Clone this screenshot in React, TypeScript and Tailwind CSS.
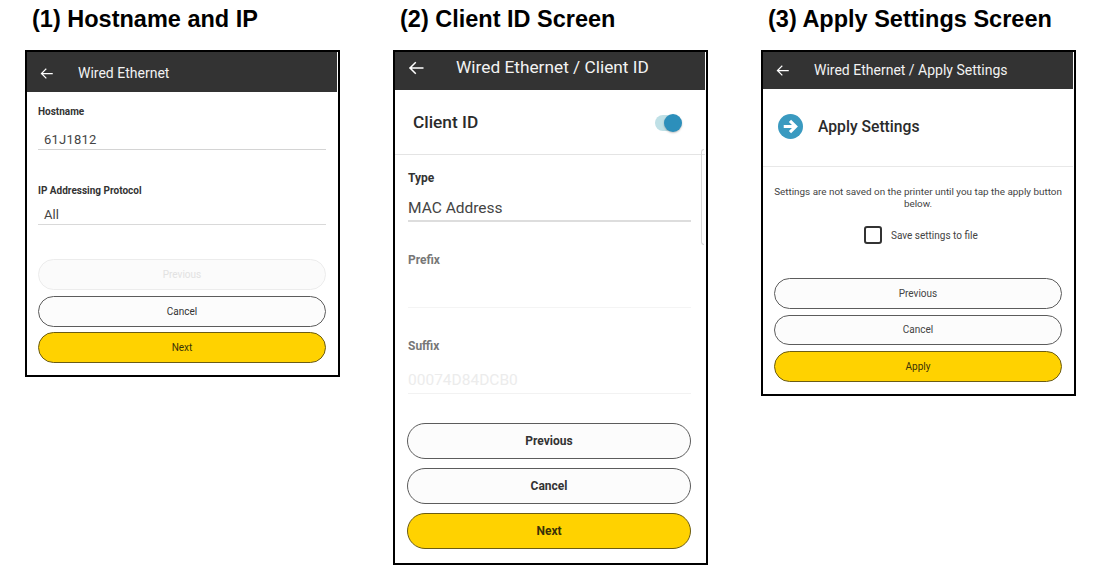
import React from "react";

function BackArrow({ size }: { size: number }) {
  return (
    <svg width={size} height={size} viewBox="0 0 24 24" fill="none" stroke="#ffffff" strokeWidth="2" strokeLinecap="square" className="shrink-0">
      <path d="M21 12H4M11 5l-7 7 7 7" />
    </svg>
  );
}

function Pill({ label, kind, cls }: { label: string; kind: "plain" | "primary" | "disabled"; cls: string }) {
  const look =
    kind === "primary"
      ? "bg-[#ffd200] border-[#6b5c14] text-[#3a3208]"
      : kind === "disabled"
        ? "bg-[#fbfbfb] border-[#ececec] text-[#e2e2e2]"
        : "bg-[#fcfcfc] border-[#5c5c5c] text-[#333333]";
  return (
    <div className={`flex shrink-0 items-center justify-center rounded-full border ${look} ${cls}`}>{label}</div>
  );
}

export default function App() {
  return (
    <div className="flex h-[584px] w-[1115px] items-start gap-[53px] overflow-hidden bg-white pl-[25px] font-['Roboto',sans-serif]">
      {/* Column 1 */}
      <div className="flex w-[315px] flex-col">
        <h2 className="h-[50px] pl-[7px] pt-[6px] font-['Liberation_Sans',sans-serif] text-[23.5px] leading-[27px] font-bold text-black">(1) Hostname and IP</h2>
        <div className="flex h-[327px] flex-col border-2 border-black pr-px">
          <div className="flex h-[40px] shrink-0 items-center bg-[#333333] pl-[12px] pt-[2px] text-[14px] text-[#f2f2f2]">
            <BackArrow size={15} />
            <span className="ml-[24px]">Wired Ethernet</span>
          </div>
          <div className="flex flex-1 flex-col px-[11px]">
            <div className="mt-[14px] text-[10px] leading-[12px] font-bold text-[#333333]">Hostname</div>
            <div className="mt-[13px] h-[19px] border-b border-[#d4d4d4] pl-[6px] pt-px text-[13px] leading-[16px] tracking-[0.2px] text-[#444444]">61J1812</div>
            <div className="mt-[35px] text-[10px] leading-[12px] font-bold text-[#333333]">IP Addressing Protocol</div>
            <div className="mt-[9px] h-[19px] border-b border-[#d9d9d9] pl-[6px] pt-px text-[13px] leading-[16px] text-[#444444]">All</div>
            <div className="mt-[34px] flex flex-col gap-[5.5px] text-[10px]">
              <Pill label="Previous" kind="disabled" cls="h-[31px]" />
              <Pill label="Cancel" kind="plain" cls="h-[31px]" />
              <Pill label="Next" kind="primary" cls="h-[31px]" />
            </div>
          </div>
        </div>
      </div>

      {/* Column 2 */}
      <div className="flex w-[315px] flex-col">
        <h2 className="h-[50px] pl-[7px] pt-[6px] font-['Liberation_Sans',sans-serif] text-[23.5px] leading-[27px] font-bold text-black">(2) Client ID Screen</h2>
        <div className="relative flex h-[515px] flex-col border-2 border-black pr-px">
          <div className="flex h-[38px] shrink-0 items-center bg-[#333333] pl-[12px] pb-[6px] text-[17.3px] text-[#f2f2f2]">
            <BackArrow size={18} />
            <span className="ml-[31px]">Wired Ethernet / Client ID</span>
          </div>
          <div className="flex h-[65px] shrink-0 items-center justify-between border-b border-[#e4e4e4] pl-[18px] pr-[24px] pt-[2px]">
            <span className="text-[17.3px] font-medium text-[#2b2b2b]">Client ID</span>
            <div className="relative h-[16px] w-[26px] rounded-full bg-[#bfe0e6]">
              <div className="absolute -top-px right-[-1px] h-[18px] w-[18px] rounded-full bg-[#2c8fbb] shadow-[0_1px_2px_rgba(0,0,0,0.25)]" />
            </div>
          </div>
          <div className="absolute right-[2px] top-[97px] h-[96px] w-[3px] rounded-l-[3px] border-y border-l border-[#d8d8d8]" />
          <div className="flex flex-1 flex-col pl-[12px] pr-[14px]">
            <div className="mt-[16px] pl-px text-[12px] leading-[14px] font-bold text-[#333333]">Type</div>
            <div className="mt-[13px] ml-px h-[24px] border-b-2 border-[#dddddd] pt-px text-[15.5px] leading-[19px] text-[#444444]">MAC Address</div>
            <div className="mt-[31px] pl-px text-[12px] leading-[14px] font-bold text-[#777777]">Prefix</div>
            <div className="ml-px h-[41px] shrink-0 border-b border-[#f4f4f4]" />
            <div className="mt-[31px] pl-px text-[12px] leading-[14px] font-bold text-[#777777]">Suffix</div>
            <div className="mt-[17px] ml-px h-[24px] border-b border-[#f2f2f2] pt-px text-[15.5px] leading-[19px] text-[#ececec]">00074D84DCB0</div>
            <div className="mt-[29px] flex flex-col gap-[9px] text-[12px] font-bold">
              <Pill label="Previous" kind="plain" cls="h-[36px] text-[#222222]" />
              <Pill label="Cancel" kind="plain" cls="h-[36px] text-[#222222]" />
              <Pill label="Next" kind="primary" cls="h-[36px]" />
            </div>
          </div>
        </div>
      </div>

      {/* Column 3 */}
      <div className="flex w-[315px] flex-col">
        <h2 className="h-[50px] pl-[7px] pt-[6px] font-['Liberation_Sans',sans-serif] text-[23.5px] leading-[27px] font-bold text-black">(3) Apply Settings Screen</h2>
        <div className="flex h-[346px] flex-col border-2 border-black pr-px">
          <div className="flex h-[37px] shrink-0 items-center bg-[#333333] pl-[12px] text-[14px] text-[#f2f2f2]">
            <BackArrow size={15} />
            <span className="ml-[24px]">Wired Ethernet / Apply Settings</span>
          </div>
          <div className="flex h-[78px] shrink-0 items-center border-b border-[#e8e8e8] pb-[2px] pl-[15px]">
            <svg width="25" height="25" viewBox="0 0 24 24" className="shrink-0">
              <circle cx="12" cy="12" r="12" fill="#3a9ac0" />
              <path d="M5.5 12h11M11.5 6.5l5.5 5.5-5.5 5.5" fill="none" stroke="#ffffff" strokeWidth="3" />
            </svg>
            <span className="ml-[15px] text-[15.7px] font-medium text-[#2b2b2b]">Apply Settings</span>
          </div>
          <div className="flex flex-1 flex-col px-[11px]">
            <p className="-mx-[2px] mt-[19px] text-center text-[9.9px] leading-[12px] text-[#444444]">Settings are not saved on the printer until you tap the apply button below.</p>
            <div className="mt-[16px] flex items-center pl-[90px]">
              <div className="h-[18px] w-[18px] rounded-[3px] border-2 border-[#333333]" />
              <span className="ml-[9px] mt-px text-[10px] text-[#444444]">Save settings to file</span>
            </div>
            <div className="mt-[34px] flex flex-col gap-[6px] text-[10px]">
              <Pill label="Previous" kind="plain" cls="h-[30.5px] text-[#444444]" />
              <Pill label="Cancel" kind="plain" cls="h-[30.5px] text-[#444444]" />
              <Pill label="Apply" kind="primary" cls="h-[30.5px]" />
            </div>
          </div>
        </div>
      </div>
    </div>
  );
}
